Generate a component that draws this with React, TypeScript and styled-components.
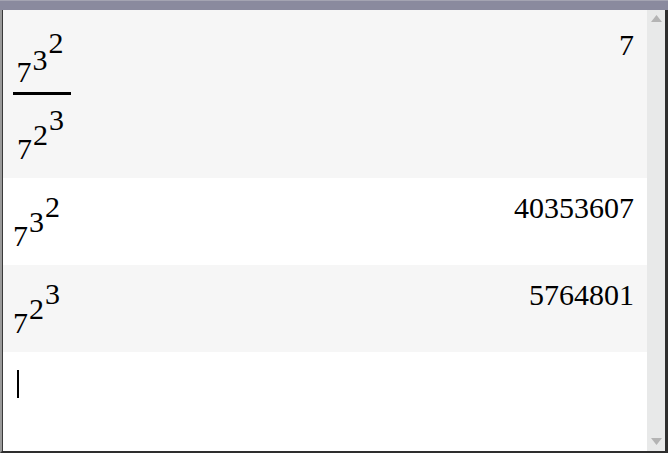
import React from 'react';
import styled, { createGlobalStyle } from 'styled-components';

const SERIF = `'Liberation Serif', 'Noto Serif', 'Nimbus Roman', 'Nimbus Roman No9 L', 'FreeSerif', 'Tinos', 'DejaVu Serif', 'Times New Roman', Times, serif`;

const GlobalStyle = createGlobalStyle`
  html, body {
    margin: 0;
    padding: 0;
    background: #ffffff;
  }
`;

const Window = styled.div`
  width: 668px;
  height: 453px;
  display: flex;
  flex-direction: column;
  box-sizing: border-box;
  font-family: ${SERIF};
  color: #000;
`;

const TitleBar = styled.div`
  height: 10px;
  flex: none;
  box-sizing: border-box;
  background: #8a8a9e;
  border-top: 1px solid #a4a4b2;
`;

const Body = styled.div`
  flex: 1;
  display: flex;
  min-height: 0;
  border-left: 2px solid #9a9a9a;
  border-right: 3px solid #2e2e2e;
  border-bottom: 2px solid #2e2e2e;
`;

const History = styled.div`
  flex: 1;
  display: flex;
  flex-direction: column;
  border-left: 1px solid #3a3a3a;
`;

const Entry = styled.div<{ $shaded?: boolean; $height: number }>`
  height: ${p => p.$height}px;
  flex: none;
  display: flex;
  justify-content: space-between;
  align-items: flex-start;
  padding: 0 13px 0 10px;
  background: ${p => (p.$shaded ? '#f6f6f6' : '#ffffff')};
`;

const Input = styled.div<{ $top: number }>`
  margin-top: ${p => p.$top}px;
  display: flex;
`;

const Result = styled.div<{ $top: number }>`
  margin-top: ${p => p.$top}px;
  font-size: 30px;
  line-height: 30px;
`;

const PowerBox = styled.span`
  display: inline-flex;
  align-items: flex-end;
  font-size: 30px;
  line-height: 30px;
`;

const Base = styled.span`
  display: block;
`;

const Exponent = styled.span<{ $raise: number }>`
  display: block;
  padding-bottom: ${p => p.$raise}px;
  margin-left: 1px;
`;

const Fraction = styled.div`
  display: inline-flex;
  flex-direction: column;
  align-items: center;
`;

const Numerator = styled.div`
  padding: 0 7px 5px 3px;
`;

const Bar = styled.div`
  align-self: stretch;
  height: 3px;
  background: #000;
`;

const Denominator = styled.div`
  padding: 10px 7px 0 4px;
`;

const Cursor = styled.div`
  margin: 18px 0 0 4px;
  width: 1.5px;
  height: 28px;
  background: #000;
`;

const Scrollbar = styled.div`
  width: 18px;
  flex: none;
  background: #e8e9e9;
  display: flex;
  flex-direction: column;
  justify-content: space-between;
  align-items: center;
  padding: 5px 0 6px;
  box-sizing: border-box;
`;

const Arrow = styled.svg`
  display: block;
  width: 11px;
  height: 7px;
`;

function Power({ base, exp, raise }: { base: React.ReactNode; exp: React.ReactNode; raise: number }) {
  return (
    <PowerBox>
      <Base>{base}</Base>
      <Exponent $raise={raise}>{exp}</Exponent>
    </PowerBox>
  );
}

function Tower({ a, b, c, r1, r2 }: { a: string; b: string; c: string; r1: number; r2: number }) {
  return <Power base={a} raise={r1} exp={<Power base={b} exp={c} raise={r2} />} />;
}

export default function App() {
  return (
    <>
      <GlobalStyle />
      <Window>
        <TitleBar />
        <Body>
          <History>
            <Entry $shaded $height={168}>
              <Input $top={18}>
                <Fraction>
                  <Numerator>
                    <Tower a="7" b="3" c="2" r1={12} r2={17} />
                  </Numerator>
                  <Bar />
                  <Denominator>
                    <Tower a="7" b="2" c="3" r1={14} r2={15} />
                  </Denominator>
                </Fraction>
              </Input>
              <Result $top={20}>7</Result>
            </Entry>
            <Entry $height={87}>
              <Input $top={14}>
                <Tower a="7" b="3" c="2" r1={14} r2={15} />
              </Input>
              <Result $top={15}>40353607</Result>
            </Entry>
            <Entry $shaded $height={87}>
              <Input $top={14}>
                <Tower a="7" b="2" c="3" r1={14} r2={15} />
              </Input>
              <Result $top={15}>5764801</Result>
            </Entry>
            <Entry $height={99}>
              <Cursor />
            </Entry>
          </History>
          <Scrollbar>
            <Arrow viewBox="0 0 11 7">
              <polygon points="0,7 5.5,0 11,7" fill="#b4b4b4" />
            </Arrow>
            <Arrow viewBox="0 0 11 7">
              <polygon points="0,0 11,0 5.5,7" fill="#b4b4b4" />
            </Arrow>
          </Scrollbar>
        </Body>
      </Window>
    </>
  );
}
